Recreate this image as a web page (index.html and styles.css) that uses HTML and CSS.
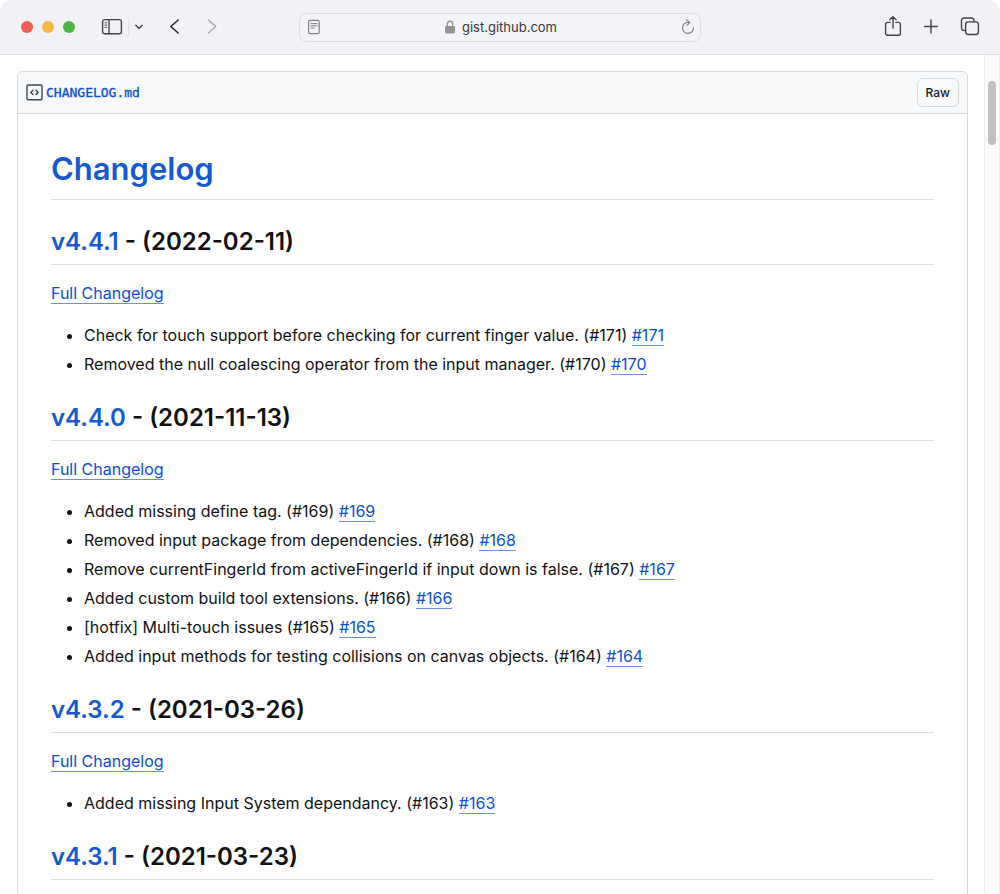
FILE: index.html
```html
<!DOCTYPE html>
<html lang="en">
<head>
<meta charset="utf-8">
<title>CHANGELOG.md</title>
<link rel="stylesheet" href="styles.css">
</head>
<body>
<div class="window">
  <header class="toolbar">
    <div class="tools-left">
      <div class="lights"><span class="light red"></span><span class="light amber"></span><span class="light green"></span></div>
      <button class="tool" aria-label="Sidebar"><svg width="22" height="18" viewBox="0 0 22 18"><rect x="1.600" y="1.600" width="18.800" height="14.200" rx="2"/><path d="M8 1.600v14.200"/><path class="thin" d="M4 4.800h1.600M4 7.100h1.600M4 9.400h1.600"/></svg></button>
      <span class="divider"></span>
      <button class="tool" aria-label="Tab groups"><svg width="10" height="8" viewBox="0 0 10 8"><path d="M1.800 2.200 5 5.400l3.200-3.200"/></svg></button>
      <button class="tool back" aria-label="Back"><svg width="12" height="18" viewBox="0 0 12 18"><path d="M9.200 2 1.800 8.500l7.400 6.500"/></svg></button>
      <button class="tool forward" aria-label="Forward"><svg width="12" height="18" viewBox="0 0 12 18"><path d="m2.400 2 7.400 6.500L2.400 15"/></svg></button>
    </div>
    <div class="address">
      <button class="tool muted" aria-label="Reader"><svg width="14" height="16" viewBox="0 0 14 16"><rect x="1.600" y="1.400" width="10.600" height="13.200" rx="1.600"/><path class="thin" d="M4 4.600h6M4 6.800h6M4 9h3.400"/></svg></button>
      <a class="site" href="#"><svg width="10" height="14" viewBox="0 0 10 14"><rect class="solid" x="0" y="6" width="10" height="7.400" rx="1.400"/><path d="M2.200 6.400V4a2.800 2.800 0 0 1 5.600 0v2.400"/></svg>gist.github.com</a>
      <button class="tool muted" aria-label="Reload"><svg width="14" height="16" viewBox="0 0 14 16"><path d="M7.400 3.400a5.500 5.500 0 1 0 5.100 5.400M5.600 1l3.100 2.600L6 6.300"/></svg></button>
    </div>
    <div class="tools-right">
      <button class="tool" aria-label="Share"><svg width="18" height="22" viewBox="0 0 18 22"><path d="M6 6.400H3.600a2 2 0 0 0-2 2v8.800a2 2 0 0 0 2 2h10.800a2 2 0 0 0 2-2V8.400a2 2 0 0 0-2-2H12M9 12V1M5.900 3.800 9 .8l3.100 3"/></svg></button>
      <button class="tool" aria-label="New tab"><svg width="16" height="16" viewBox="0 0 16 16"><path d="M8 1v13M1.500 7.500h13"/></svg></button>
      <button class="tool" aria-label="Tab overview"><svg width="20" height="20" viewBox="0 0 20 20"><path d="M5.600 13.400H4A2.500 2.500 0 0 1 1.500 11V3.500A2.500 2.500 0 0 1 4 1h7.500A2.500 2.500 0 0 1 14 3.500v1.400"/><rect x="5.600" y="4.900" width="12.800" height="12.600" rx="2.500"/></svg></button>
    </div>
  </header>
  <div class="viewport">
    <main class="page">
      <article class="file">
        <div class="file-head">
          <a class="file-name" href="#"><svg width="18" height="18" viewBox="0 0 18 18"><rect x="1" y="1" width="15" height="14.800" rx="1"/><path d="M7 6.200 4.800 8.400 7 10.600M10 6.200l2.200 2.200-2.200 2.200"/></svg>CHANGELOG.md</a>
          <button class="raw">Raw</button>
        </div>
        <div class="markdown">
          <h1><a href="#">Changelog</a></h1>
          <h2><a href="#">v4.4.1</a> - (2022-02-11)</h2>
          <p><a href="#">Full Changelog</a></p>
          <ul>
            <li>Check for touch support before checking for current finger value. (#171) <a href="#">#171</a></li>
            <li>Removed the null coalescing operator from the input manager. (#170) <a href="#">#170</a></li>
          </ul>
          <h2><a href="#">v4.4.0</a> - (2021-11-13)</h2>
          <p><a href="#">Full Changelog</a></p>
          <ul>
            <li>Added missing define tag. (#169) <a href="#">#169</a></li>
            <li>Removed input package from dependencies. (#168) <a href="#">#168</a></li>
            <li>Remove currentFingerId from activeFingerId if input down is false. (#167) <a href="#">#167</a></li>
            <li>Added custom build tool extensions. (#166) <a href="#">#166</a></li>
            <li>[hotfix] Multi-touch issues (#165) <a href="#">#165</a></li>
            <li>Added input methods for testing collisions on canvas objects. (#164) <a href="#">#164</a></li>
          </ul>
          <h2><a href="#">v4.3.2</a> - (2021-03-26)</h2>
          <p><a href="#">Full Changelog</a></p>
          <ul>
            <li>Added missing Input System dependancy. (#163) <a href="#">#163</a></li>
          </ul>
          <h2><a href="#">v4.3.1</a> - (2021-03-23)</h2>
        </div>
      </article>
    </main>
    <div class="scroll-track"><div class="scroll-thumb"></div></div>
  </div>
</div>
</body>
</html>
```
FILE: styles.css
```css
* { box-sizing: border-box; }
body { margin: 0; background: #fff; color: #101113; font-family: Inter, "Liberation Sans", sans-serif; font-size: 16px; line-height: 25px; }
button { font: inherit; color: inherit; }
a { color: #0b4fd2; text-decoration: none; }
svg { display: block; flex: none; fill: none; stroke: currentColor; stroke-width: 1.4; stroke-linecap: round; stroke-linejoin: round; }
svg .thin { stroke-width: 1; }
svg .solid { fill: currentColor; stroke: none; }

.window { display: flex; flex-direction: column; height: 100vh; overflow: hidden; border-radius: 12px 12px 0 0; }

.toolbar { display: grid; grid-template-columns: 1fr 402px 1fr; align-items: center; height: 55px; flex: none; padding: 0 20px; background: #f2f2f6; border-bottom: 1px solid #dfdfe1; }
.tools-left, .tools-right { display: flex; align-items: center; }
.tools-right { justify-content: flex-end; gap: 21px; }
.lights { display: flex; gap: 9px; margin-right: 26px; padding-left: 1px; }
.light { width: 12px; height: 12px; border-radius: 50%; }
.red { background: #f25e52; }
.amber { background: #f9b640; }
.green { background: #4ab944; }
.tool { display: flex; padding: 0; border: 0; background: none; color: #444348; }
.divider { width: 1px; height: 18px; margin: 0 5px; background: #e3e3e7; }
.back { margin-left: 25px; color: #222226; }
.forward { margin-left: 25px; color: #a5a5aa; }
.address { display: flex; align-items: center; justify-content: space-between; height: 29px; padding: 0 5px 0 7px; border: 1px solid #dedee2; border-radius: 8px; background: #f3f4f7; }
.muted { color: #818185; }
.muted svg { stroke-width: 1.2; }
.site { display: flex; align-items: center; gap: 7px; font-size: 13px; color: #38383b; }
.site svg { color: #949497; }

.viewport { display: flex; flex: 1; min-height: 0; }
.page { flex: 1; padding: 16px 16px 16px 17px; overflow: hidden; }
.scroll-track { flex: none; width: 16px; padding: 26px 3px; background: #fafafa; border-left: 1px solid #ececec; border-right: 1px solid #ececec; }
.scroll-thumb { width: 8px; height: 64px; border-radius: 4px; background: #c1c1c1; }

.file { border: 1px solid #d3d9df; border-radius: 6px; }
.file-head { display: flex; align-items: center; justify-content: space-between; padding: 6px 8px; border-bottom: 1px solid #d3d9df; border-radius: 6px 6px 0 0; background: #f6f8fa; }
.file-name { display: flex; align-items: center; gap: 2px; font-family: "DejaVu Sans Mono", monospace; font-size: 13px; font-weight: 400; -webkit-text-stroke: 0.3px currentColor; }
.file-name svg { color: #3c4650; }
.raw { height: 29px; padding: 0 8px; border: 1px solid #d5d9de; border-radius: 6px; background: #f7f9fb; color: #17191c; font-size: 12px; font-weight: 500; line-height: 20px; }

.markdown { padding: 34px 33px 33px; }
.markdown h1, .markdown h2 { border-bottom: 1px solid #d8dee4; font-weight: 600; }
.markdown h1 a, .markdown h2 a { color: #1459d2; }
.markdown h1 { margin: 0 0 26px; padding-bottom: 9px; font-size: 31px; line-height: 42px; }
.markdown h2 { margin: 25px 0 16px; padding-bottom: 6px; font-size: 24px; line-height: 32px; }
.markdown p { margin: 0 0 17px; }
.markdown ul { margin: 0; padding-left: 33px; }
.markdown li + li { margin-top: 4px; }
.markdown p a, .markdown li a { border-bottom: 1px solid #6d8fe0; }
```
